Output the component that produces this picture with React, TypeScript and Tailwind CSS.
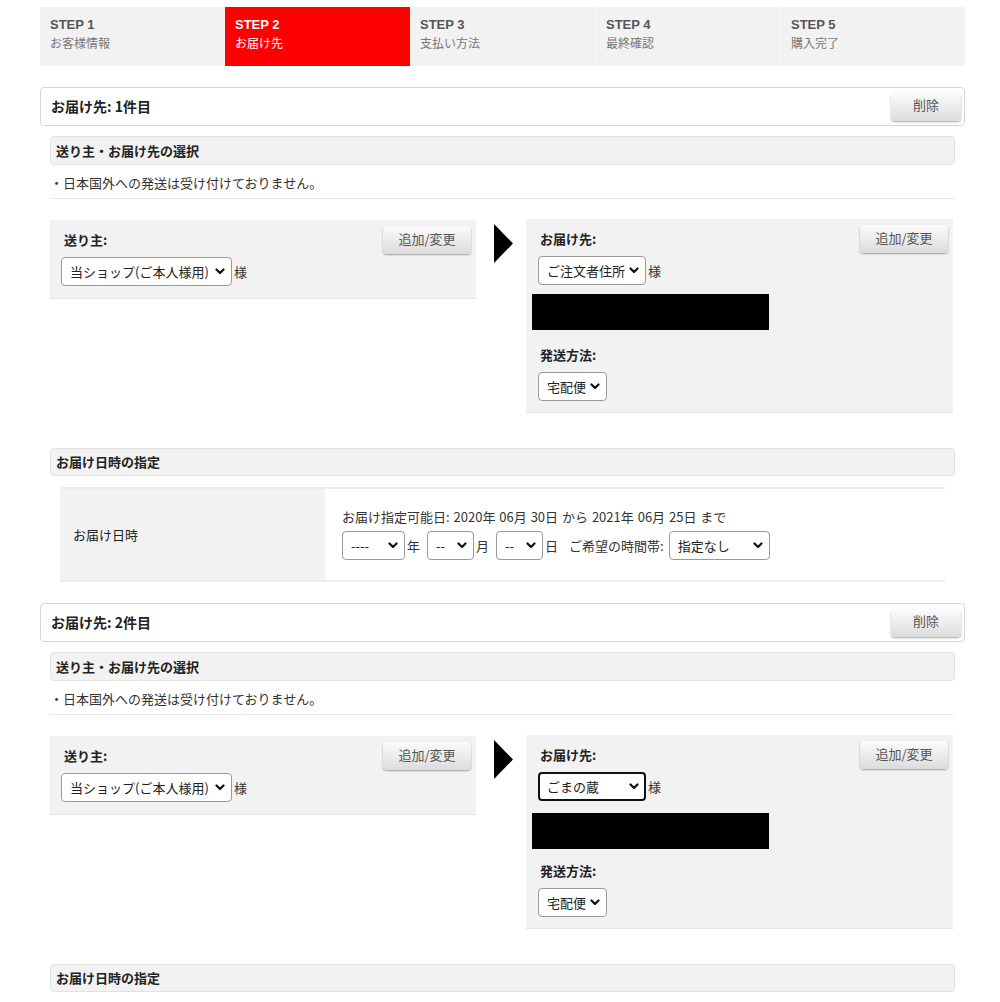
import React from "react";

const steps = [
  { no: "STEP 1", label: "お客様情報" },
  { no: "STEP 2", label: "お届け先" },
  { no: "STEP 3", label: "支払い方法" },
  { no: "STEP 4", label: "最終確認" },
  { no: "STEP 5", label: "購入完了" },
];

const jp = "font-['Meiryo','Noto_Sans_CJK_JP',sans-serif]";

const Chevron = () => (
  <svg width="10" height="7" viewBox="0 0 10 7" className="shrink-0">
    <path d="M1.5 1.5 L5 5 L8.5 1.5" fill="none" stroke="#111" strokeWidth="2.2" strokeLinecap="round" strokeLinejoin="round" />
  </svg>
);

// looks like a native select box
const FakeSelect = ({
  value,
  width,
  focused = false,
}: {
  value: string;
  width: string;
  focused?: boolean;
}) => (
  <div
    className={`${width} h-[29px] inline-flex items-center justify-between bg-white rounded-[4px] text-[13px] text-[#222] ${
      focused ? "border-2 border-[#111] pl-[7px] pr-[5px]" : "border border-[#9a9a9a] pl-[8px] pr-[6px]"
    }`}
  >
    <span className="whitespace-nowrap">{value}</span>
    <Chevron />
  </div>
);

const GrayButton = ({ label, width }: { label: string; width: string }) => (
  <button
    className={`${width} h-[28px] rounded-[4px] bg-gradient-to-b from-[#fbfbfb] to-[#dcdcdc] shadow-[0_1px_2px_rgba(0,0,0,0.35)] text-[13px] text-[#555] pb-[3px]`}
  >
    {label}
  </button>
);

const Shipment = ({
  index,
  focused,
  showDate,
}: {
  index: number;
  focused: boolean;
  showDate: boolean;
}) => (
  <div>
    {/* Header card */}
    <div className="h-[39px] border border-[#d6d6d6] rounded-[4px] bg-white flex items-center justify-between pl-[10px] pr-[3px]">
      <h2 className="text-[14px] font-bold text-[#222]">お届け先: {index}件目</h2>
      <GrayButton label="削除" width="w-[70px]" />
    </div>

    <div className="px-[10px]">
      {/* Sender / recipient selection */}
      <div className="mt-[10px] h-[29px] flex items-center pl-[5px] bg-[#f2f2f2] border border-[#e2e2e2] rounded-[4px] text-[13px] font-bold text-[#222]">
        送り主・お届け先の選択
      </div>
      <p className="pt-[10px] pb-[8px] leading-[15px] text-[13px] text-[#333] border-b border-[#e8e8e8]">
        ・日本国外への発送は受け付けておりません。
      </p>

      <div className="mt-[20px] flex items-start">
        {/* Sender */}
        <div className="mt-[1px] w-[426px] bg-[#f2f2f2] border-b border-[#e4e4e4] pt-[6px] pl-[11px] pr-[5px] pb-[12px]">
          <div className="flex items-center justify-between">
            <span className="ml-[3px] text-[13px] font-bold text-[#222]">送り主:</span>
            <GrayButton label="追加/変更" width="w-[88px]" />
          </div>
          <div className="mt-[3px] flex items-center gap-[2px] text-[13px] text-[#333]">
            <FakeSelect value="当ショップ(ご本人様用)" width="w-[171px]" />
            <span>様</span>
          </div>
        </div>

        {/* Arrow */}
        <div className="w-[50px] pl-[18px] pt-[5px]">
          <svg width="19" height="39" viewBox="0 0 19 39">
            <path d="M0 0 L19 19.5 L0 39 Z" fill="#000" />
          </svg>
        </div>

        {/* Recipient */}
        <div className="w-[427px] bg-[#f2f2f2] border-b border-[#e4e4e4] pt-[6px] pl-[6px] pr-[5px] pb-[11px]">
          <div className="flex items-center justify-between">
            <span className="ml-[8px] text-[13px] font-bold text-[#222]">お届け先:</span>
            <GrayButton label="追加/変更" width="w-[88px]" />
          </div>
          <div className="mt-[3px] ml-[6px] flex items-center gap-[2px] text-[13px] text-[#333]">
            <FakeSelect
              value={focused ? "ごまの蔵" : "ご注文者住所"}
              width="w-[108px]"
              focused={focused}
            />
            <span>様</span>
          </div>
          <div className={`${focused ? "mt-[12px]" : "mt-[9px]"} w-[237px] h-[36px] bg-black`} />
          <p
            className={`${
              focused ? "mt-[14px]" : "mt-[17px]"
            } ml-[8px] text-[13px] leading-[16px] font-bold text-[#222]`}
          >
            発送方法:
          </p>
          <div className="mt-[9px] ml-[6px]">
            <FakeSelect value="宅配便" width="w-[69px]" />
          </div>
        </div>
      </div>

      {/* Delivery date */}
      <div className="mt-[35px] h-[28px] flex items-center pl-[5px] bg-[#f2f2f2] border border-[#e2e2e2] rounded-[4px] text-[13px] font-bold text-[#222]">
        お届け日時の指定
      </div>
      {showDate && (
        <div className="mt-[11px] mx-[10px] h-[95px] flex border-t-2 border-b-2 border-[#ececec]">
          <div className="w-[265px] bg-[#f2f2f2] flex items-center pl-[13px] text-[13px] text-[#222]">
            お届け日時
          </div>
          <div className="flex-1 flex flex-col justify-center pl-[17px] text-[13px] text-[#333]">
            <p className="leading-[16px] [word-spacing:1px]">
              お届け指定可能日: 2020年 06月 30日 から 2021年 06月 25日 まで
            </p>
            <div className="mt-[6px] flex items-center">
              <FakeSelect value="----" width="w-[63px]" />
              <span className="ml-[2px] mr-[7px]">年</span>
              <FakeSelect value="--" width="w-[47px]" />
              <span className="ml-[2px] mr-[7px]">月</span>
              <FakeSelect value="--" width="w-[47px]" />
              <span className="ml-[2px] mr-[11px]">日</span>
              <span className="mr-[5px]">ご希望の時間帯:</span>
              <FakeSelect value="指定なし" width="w-[101px]" />
            </div>
          </div>
        </div>
      )}
    </div>
  </div>
);

export default function App() {
  return (
    <div className={`${jp} bg-white min-h-screen pt-[7px]`}>
      <div className="ml-[40px] w-[925px]">
        {/* Step bar */}
        <div className="grid grid-cols-5 h-[59px] bg-[#f2f2f2]">
          {steps.map((s, i) => (
            <div
              key={s.no}
              className={`pl-[10px] pt-[10px] ${
                i === 1 ? "bg-[#ff0000] text-white" : i > 2 ? "border-l border-[#fafafa]" : ""
              }`}
            >
              <div
                className={`font-['Liberation_Sans',Arial,sans-serif] text-[13px] font-bold leading-[16px] ${
                  i === 1 ? "text-white" : "text-[#555]"
                }`}
              >
                {s.no}
              </div>
              <div className={`mt-[2px] text-[12px] leading-[16px] ${i === 1 ? "text-white" : "text-[#777]"}`}>
                {s.label}
              </div>
            </div>
          ))}
        </div>

        <div className="mt-[21px] flex flex-col gap-[21px]">
          <Shipment index={1} focused={false} showDate={true} />
          <Shipment index={2} focused={true} showDate={false} />
        </div>
      </div>
    </div>
  );
}
